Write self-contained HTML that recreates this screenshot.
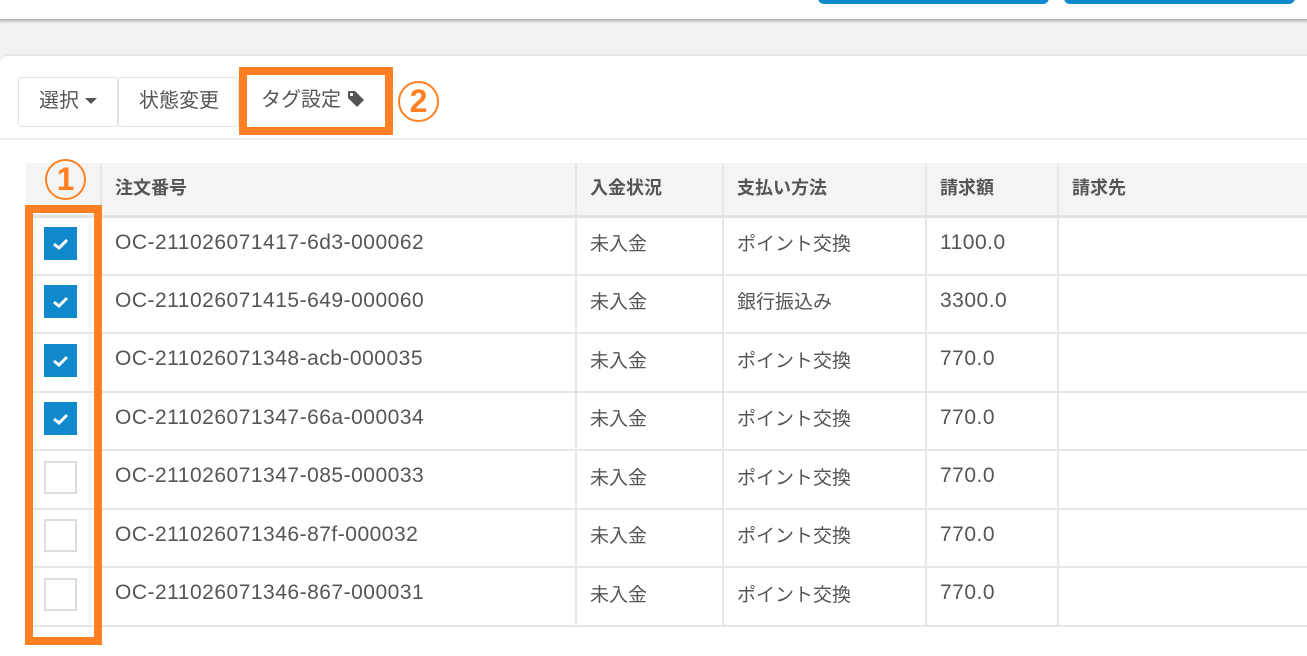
<!DOCTYPE html>
<html><head><meta charset="utf-8"><style>
*{box-sizing:border-box;margin:0;padding:0}
body{width:1307px;height:627px;overflow:hidden;background:#f2f2f2;font-family:"Liberation Sans","Noto Sans CJK JP",sans-serif;color:#555;position:relative}
.top{position:absolute;left:-10px;top:-10px;width:1330px;height:29px;background:#fff;border-radius:0 0 12px 12px;box-shadow:0 2px 3px rgba(0,0,0,.3)}
.bb{position:absolute;top:-10px;height:14px;background:#1089cc;border-radius:0 0 6px 6px}
.card{position:absolute;left:0;top:56px;width:1320px;height:600px;background:#fff;border-radius:8px 0 0 0;box-shadow:0 -1px 2px rgba(0,0,0,.08)}
.btn{position:absolute;top:77px;height:50px;border:1px solid #e3e3e3;border-radius:3px;font-size:20px;line-height:46px;padding-left:20px;color:#555}
.obox{position:absolute;border:8px solid #ff8022}
.circ{position:absolute;border:2px solid #ff8022;border-radius:50%;color:#ff8022;font-weight:bold;text-align:center;font-size:32px}
.sep{position:absolute;left:0;right:0;top:138px;height:2px;background:#ececec}
table{position:absolute;left:26px;top:163px;border-collapse:collapse;width:1300px}
th{background:#f4f4f4;height:53px;text-align:left;font-size:18px;font-weight:bold;color:#555;padding-left:13px;padding-bottom:4px;border-right:2px solid #e6e6e6;border-bottom:3px solid #e3e3e3}
td{height:58.5px;font-size:19px;padding-left:13px;padding-bottom:6px;border-right:2px solid #e6e6e6;border-bottom:2px solid #e6e6e6;color:#555}
.l{font-size:21px;letter-spacing:0.5px}
.cb{display:inline-block;width:33px;height:33px;vertical-align:middle;margin-top:6px}
.on{background:#1089cc}
.off{border:2px solid #ddd}
</style></head><body>
<div class="top"></div>
<div class="bb" style="left:818px;width:231px"></div>
<div class="bb" style="left:1064px;width:231px"></div>
<div class="card"></div>
<div class="btn" style="left:18px;width:100px">選択 <svg width="12" height="8" viewBox="0 0 12 8" style="vertical-align:2px"><path d="M0 1H12L6 7Z" fill="#555"/></svg></div>
<div class="btn" style="left:118px;width:121px">状態変更</div>
<div class="btn" style="left:239px;width:154px;border:none;padding-left:22px">タグ設定 <svg width="18" height="18" viewBox="0 0 18 18" style="vertical-align:-2px"><path d="M1 2 Q1 1 2 1 H8 L17 10 L10 17 L1 8 Z" fill="#555"/><circle cx="4.5" cy="4.5" r="1.6" fill="#fff"/></svg></div>
<div class="obox" style="left:239px;top:67px;width:154px;height:68px"></div>
<div class="circ" style="left:398px;top:81px;width:41px;height:41px;line-height:37px">2</div>
<div class="sep"></div>
<table>
<tr><th style="width:75px;padding:0"></th><th style="width:475px">注文番号</th><th style="width:147px">入金状況</th><th style="width:203px">支払い方法</th><th style="width:132px">請求額</th><th>請求先</th></tr>
<tr><td style="padding-left:18px;padding-bottom:10px"><span class="cb on"><svg width="33" height="33"><path d="M10 17 L15 21 L23 13" stroke="#fff" stroke-width="3" fill="none"/></svg></span></td><td class="l">OC-211026071417-6d3-000062</td><td>未入金</td><td>ポイント交換</td><td class="l">1100.0</td><td></td></tr>
<tr><td style="padding-left:18px;padding-bottom:10px"><span class="cb on"><svg width="33" height="33"><path d="M10 17 L15 21 L23 13" stroke="#fff" stroke-width="3" fill="none"/></svg></span></td><td class="l">OC-211026071415-649-000060</td><td>未入金</td><td>銀行振込み</td><td class="l">3300.0</td><td></td></tr>
<tr><td style="padding-left:18px;padding-bottom:10px"><span class="cb on"><svg width="33" height="33"><path d="M10 17 L15 21 L23 13" stroke="#fff" stroke-width="3" fill="none"/></svg></span></td><td class="l">OC-211026071348-acb-000035</td><td>未入金</td><td>ポイント交換</td><td class="l">770.0</td><td></td></tr>
<tr><td style="padding-left:18px;padding-bottom:10px"><span class="cb on"><svg width="33" height="33"><path d="M10 17 L15 21 L23 13" stroke="#fff" stroke-width="3" fill="none"/></svg></span></td><td class="l">OC-211026071347-66a-000034</td><td>未入金</td><td>ポイント交換</td><td class="l">770.0</td><td></td></tr>
<tr><td style="padding-left:18px;padding-bottom:10px"><span class="cb off"></span></td><td class="l">OC-211026071347-085-000033</td><td>未入金</td><td>ポイント交換</td><td class="l">770.0</td><td></td></tr>
<tr><td style="padding-left:18px;padding-bottom:10px"><span class="cb off"></span></td><td class="l">OC-211026071346-87f-000032</td><td>未入金</td><td>ポイント交換</td><td class="l">770.0</td><td></td></tr>
<tr><td style="padding-left:18px;padding-bottom:10px"><span class="cb off"></span></td><td class="l">OC-211026071346-867-000031</td><td>未入金</td><td>ポイント交換</td><td class="l">770.0</td><td></td></tr>
</table>
<div class="obox" style="left:25px;top:205px;width:77px;height:440px"></div>
<div class="circ" style="left:45px;top:159px;width:41px;height:41px;line-height:37px">1</div>
</body></html>
